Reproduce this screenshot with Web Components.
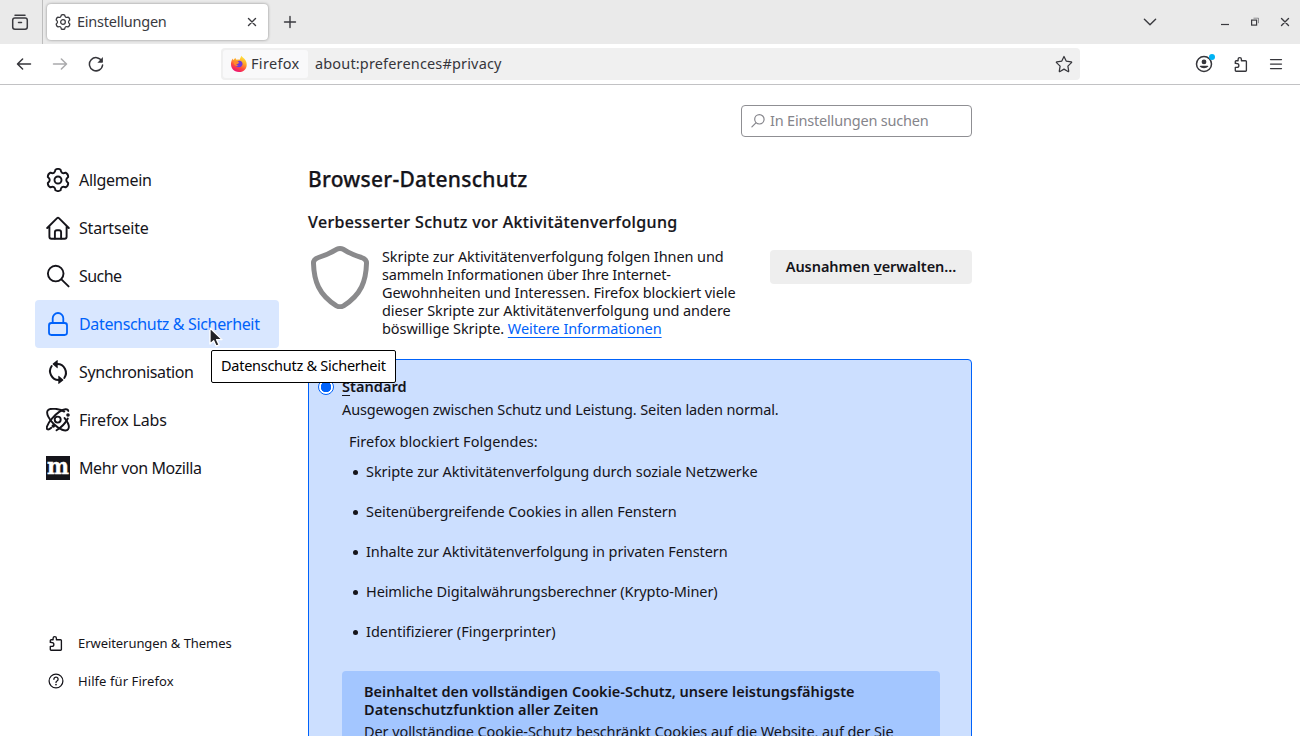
<!DOCTYPE html>
<html lang="de">
<head>
<meta charset="utf-8">
<title>Einstellungen</title>
<style>
html,body{margin:0;height:100%;overflow:hidden;background:#fff}
body{font-family:"Noto Sans","Open Sans",sans-serif;font-size:14.5px;color:#15141a}
</style>
</head>
<body>
<browser-window></browser-window>
<script>
/* Outline of a six-toothed gear around the centre of a 24px box. */
function gear(){
  const p=(r,a)=>{const t=a*Math.PI/180;return (12+r*Math.cos(t)).toFixed(2)+' '+(12-r*Math.sin(t)).toFixed(2)};
  let d='M'+p(10.6,104);
  for(let i=0;i<6;i++){const a=90-60*i;d+='Q'+p(11.9,a)+' '+p(10.6,a-14)+'Q'+p(6.3,a-30)+' '+p(10.6,a-46)}
  return d+'Z';
}
const s='fill="none" stroke="currentColor" stroke-linecap="round" stroke-linejoin="round"';
const puzzle='<path '+s+' stroke-width="1.35" d="M2.3 7.4V5.6q0-.9.9-.9H5.1V3.2a1.65 1.65 0 0 1 3.3 0V4.7h4.1q.9 0 .9.9v8.8q0 .8-.8.8H3.1q-.8 0-.8-.8v-3h1.6a1.95 1.95 0 0 0 0-3.9z"/>';
const ICONS={
  gear:[24,`<path ${s} stroke-width="1.9" d="${gear()}"/><circle cx="12" cy="12" r="3.5" ${s} stroke-width="1.9"/>`],
  home:[24,`<g ${s} stroke-width="1.9"><path d="M1.2 12 11.1 2.1q.9-.8 1.8 0L22.8 12M3.4 10.5v10.2q0 2 2 2h13.2q2 0 2-2V10.5"/><path d="M8.9 22.5v-6.2q0-2 2-2h2.2q2 0 2 2v6.2"/></g>`],
  search:[24,`<g ${s} stroke-width="1.9"><circle cx="9.7" cy="9.6" r="7.8"/><path d="m15.4 15.4 7.2 7"/></g>`],
  lock:[24,`<g ${s} stroke-width="1.8"><rect x="3" y="11" width="18" height="12" rx="2.4"/><path d="M6.7 11V6.3a5.3 5.3 0 0 1 10.6 0V11"/></g>`],
  sync:[24,`<g ${s} stroke-width="2"><path d="M11.5 4C18 4 22.500 12 18.300 18M12.500 20C6 20 1.500 12 5.700 6"/></g><path fill="currentColor" d="M11.700.5v7.200q0 .8-.7.400L6.900 4.600q-.5-.5 0-1L11 .2q.7-.4.700.300zM12.300 23.500v-7.200q0-.8.700-.4l4.100 3.500q.5.500 0 1L13 23.800q-.7.400-.7-.3z"/>`],
  atom:[24,`<g ${s} stroke-width="1.9"><path d="M5.3 19.8C1.500 23 .2 21 1.100 18.200 2.400 14 8.500 7 13.500 3.600 18 .6 22 .4 22.300 3"/><path d="M18.300 3.600C14 .8 4-.7 1.700 2.500-.2 5.400 3 11.400 8 16.300s12 8 14.200 4.800c1.500-2.300-.2-6.800-3.600-11"/><path d="M21.800 10.500c-2 4-7 9.200-11.300 11.700"/><circle cx="11.700" cy="11.600" r="3"/></g><circle cx="22" cy="7" r="1.8" fill="currentColor"/><circle cx="7.300" cy="18" r="1.8" fill="currentColor"/>`],
  mozilla:[24,`<rect width="24" height="24" fill="#15141a"/><text x="12" y="18" text-anchor="middle" fill="#fff" stroke="#fff" stroke-width=".4" font-family="DejaVu Serif,serif" font-weight="700" font-size="23" textLength="22" lengthAdjust="spacingAndGlyphs">m</text>`],
  puzzle:[16,puzzle],
  help:[16,`<circle cx="8" cy="8" r="6.9" ${s} stroke-width="1.25"/><path ${s} stroke-width="1.3" d="M5.9 6.3a2.1 2.1 0 1 1 3.4 1.5q-1.3.9-1.3 1.6"/><circle cx="8" cy="11.6" r=".85" fill="currentColor"/>`],
  view:[18,`<g ${s} stroke-width="1.5"><path d="M4 2.2h10"/><rect x="1.7" y="5" width="14.6" height="11.3" rx="2.2"/><path d="M7.5 9.500h3"/></g>`],
  close:[10,`<path ${s} stroke-width="1.4" d="m1.5 1.5 7 7m0-7-7 7"/>`],
  plus:[14,`<path ${s} stroke-width="1.4" d="M7 1.5v11M1.5 7h11"/>`],
  chevron:[14,`<path ${s} stroke-width="1.4" d="m1.4 4.2 5.6 5.6 5.6-5.6"/>`],
  min:[10,`<path stroke="currentColor" stroke-width="1.2" d="M1 7.5h8"/>`],
  restore:[10,`<rect x="1.6" y="3.1" width="5" height="5" fill="none" stroke="currentColor" stroke-width="1.2"/><path d="M3.5 1.2h5v5" fill="none" stroke="currentColor" stroke-width=".8" opacity=".65"/>`],
  back:[16,`<path ${s} stroke-width="1.5" d="M14.5 8H1.6m5-5L1.5 8l5.1 5"/>`],
  forward:[16,`<path ${s} stroke-width="1.5" d="M1.5 8h12.9M9.4 3l5.1 5-5.1 5"/>`],
  reload:[16,`<path ${s} stroke-width="1.5" d="M13.8 5A6.6 6.6 0 1 0 14.6 9"/><path fill="currentColor" d="M14.9 1v5.1q0 .6-.6.6H9.4z"/>`],
  star:[18,`<path ${s} stroke-width="1.25" d="m9 1.5 2.2 4.6 5 .7q.8.2.3.8l-3.6 3.5.8 5q0 .8-.7.4L9 14.1l-4 2.4q-.8.4-.7-.4l.8-5L1.5 7.6q-.5-.6.3-.8l5-.7z"/>`],
  account:[18,`<circle cx="9" cy="9" r="7.5" ${s} stroke-width="1.5"/><circle cx="9" cy="6.9" r="2.4" fill="currentColor"/><path fill="currentColor" d="M5.5 10.7h7q.8 0 .8.8A5.3 4 0 0 1 4.7 11.5q0-.8.8-.8z"/>`],
  menu:[16,`<path ${s} stroke-width="1.25" d="M2.5 3.5h11M2.5 8h11M2.5 12.5h11"/>`],
  glass:[16,`<g ${s} stroke-width="1.2"><circle cx="9.4" cy="6.3" r="4.7"/><path d="m5.9 9.9-4 4"/></g>`],
  shield:[64,`<path ${s} stroke-width="5" d="M28.6 4.3Q32 2.8 35.4 4.3C41 8 47 10.5 53.5 12.500Q58.800 14.300 58.500 18.500C58 35.500 53.500 49.500 35.500 60.800Q32 62.800 28.500 60.800C10.500 49.500 6 35.500 5.500 18.500Q5.200 14.300 10.500 12.500 20 9.500 28.600 4.300z"/>`],
  firefox:[18,`<defs><linearGradient id="a" x1=".8" y1="0" x2=".35" y2="1"><stop offset="0" stop-color="#fff044"/><stop offset=".4" stop-color="#ffa727"/><stop offset=".7" stop-color="#ff4b3d"/><stop offset="1" stop-color="#ec0e75"/></linearGradient></defs><path fill="url(#a)" d="M11.3.7c1 1.5 2.3 2 3.3 3.3C18.5 8.3 17.2 17 9 17 2.7 17 .2 11.5 1.2 7q.5-2.5 1.6-3.5l.6 1.7L5.3 2.8Q5.5 4 6.5 4.7q2-.6 3 .1 1-1.8 1.8-4.100z"/><path fill="#7139d8" d="M8.9 5.7c4.5-.6 5.2 6 .3 6.600-2.500.2-4.400-1.500-4.100-3.500l1.600.8 2.600-1.800-2.200-.7z"/><path fill="#ff8a2b" d="M3.400 6.300 7 6.200l1.900 1-1 1.300-1.700.4q.4 1.500 2.200 1.600l-1.300.8Q3.500 11 3.400 6.300z"/>`],
  cursor:[22,`<path d="M4 1v16l3.700-3.300 2.500 5.500 2.900-1.300-2.500-5.300H16z" fill="#222226" stroke="#fff" stroke-width="1.3" stroke-linejoin="round"/>`]
};
function define(name,html,after){
  customElements.define(name,class extends HTMLElement{
    connectedCallback(){
      if(this.shadowRoot)return;
      const t=document.createElement('template');
      t.innerHTML=typeof html==='function'?html(this):html;
      this.attachShadow({mode:'open'}).append(t.content.cloneNode(true));
      if(after)after(this);
    }
  });
}
define('ui-icon',e=>{
  const [box,body]=ICONS[e.getAttribute('name')],z=e.getAttribute('size')||box;
  return `<style>:host{display:block;flex:none;width:${z}px;height:${z}px}svg{display:block}</style><svg width="${z}" height="${z}" viewBox="0 0 ${box} ${box}">${body}</svg>`;
});
/* One line of text, tracked so that its ink takes up the width given by "w". */
define('ui-line','<style>:host{display:block;white-space:nowrap;flex:none}span{display:inline-block}</style><span><slot></slot></span>',e=>{
  const fit=()=>{
    const sp=e.shadowRoot.querySelector('span');
    sp.style.letterSpacing='0';
    const n=e.textContent.length,w=+e.getAttribute('w'),now=sp.getBoundingClientRect().width;
    if(now&&w)sp.style.letterSpacing=((w-.4-now)/n).toFixed(4)+'px';
  };
  fit();document.fonts.ready.then(fit);
});
define('tab-strip',`<style>
:host{display:flex;height:44px;flex:none;background:#eaeaea;color:#3a3a3f;align-items:center;box-sizing:border-box}
.view{height:44px;border-right:1px solid #bdbdbd;box-sizing:border-box;display:flex;align-items:center;padding-left:11px;width:43px}
.tab{margin-left:4px;width:221px;height:36px;border-radius:4px;background:#fff;box-shadow:0 0 3px rgba(0,0,0,.42);display:flex;align-items:center;box-sizing:border-box;padding:0 11px 0 8px;gap:6px}
.tab ui-line{margin-right:auto;margin-bottom:2px}
.plus{margin-left:15px}.chev{margin-left:auto}
.win{display:flex;gap:20px;margin:0 10px 0 63px}
</style><div class="view"><ui-icon name="view"></ui-icon></div>
<div class="tab"><ui-icon name="gear" size="16"></ui-icon><ui-line w="90">Einstellungen</ui-line><ui-icon name="close"></ui-icon></div>
<ui-icon class="plus" name="plus"></ui-icon><ui-icon class="chev" name="chevron"></ui-icon>
<div class="win"><ui-icon name="min"></ui-icon><ui-icon name="restore"></ui-icon><ui-icon name="close"></ui-icon></div>`);
define('nav-bar',`<style>
:host{display:flex;height:41px;flex:none;border-bottom:1px solid #c2c2c4;box-sizing:border-box;align-items:center;color:#36363b;padding:0 16px}
.nav{display:flex;gap:20px;width:205px}.off{opacity:.42}
.url{width:859px;height:32px;background:#f0f0f0;border-radius:4px;display:flex;align-items:center;box-sizing:border-box;padding:0 7px 0 2px}
.id{display:flex;align-items:center;gap:3px;background:#f9f9fa;height:28px;width:85px;border-radius:3px;box-sizing:border-box;padding-left:7px;margin-right:7px}
.url ui-line{margin-bottom:2px}
.url>ui-icon{margin-left:auto}
.tools{margin-left:auto;display:flex;align-items:center;gap:20px}
.acc{position:relative}.acc i{position:absolute;right:-2px;top:-1px;width:6px;height:6px;border-radius:50%;background:#00b3f4}
.tools ui-icon:last-child{margin-left:-1px}
</style><div class="nav"><ui-icon name="back"></ui-icon><ui-icon class="off" name="forward"></ui-icon><ui-icon name="reload"></ui-icon></div>
<div class="url"><div class="id"><ui-icon name="firefox"></ui-icon><ui-line w="49">Firefox</ui-line></div><ui-line w="187">about:preferences#privacy</ui-line><ui-icon name="star"></ui-icon></div>
<div class="tools"><div class="acc"><ui-icon name="account"></ui-icon><i></i></div><ui-icon name="puzzle"></ui-icon><ui-icon name="menu"></ui-icon></div>`);
define('nav-item',e=>`<style>
:host{display:flex;align-items:center;height:48px;padding-left:11px;gap:9px;border-radius:4px;font-size:16px;font-weight:400;box-sizing:border-box}
:host(:not([small])) ui-line{margin-bottom:1px}
:host([active]){background:#d9e7ff;color:#0062fa}
:host([small]){height:38px;font-size:13px;font-weight:400;padding-left:13px;gap:14px}
</style><ui-icon name="${e.getAttribute('icon')}"></ui-icon><ui-line w="${e.getAttribute('w')}">${e.textContent.replace('&','&amp;')}</ui-line>`);
define('side-nav',`<style>:host{display:flex;flex-direction:column;width:244px;padding:71px 0 36px 35px;flex:none}.low{margin-top:auto}</style>
<nav><nav-item icon="gear" w="73">Allgemein</nav-item><nav-item icon="home" w="70">Startseite</nav-item><nav-item icon="search" w="43">Suche</nav-item><nav-item active icon="lock" w="181">Datenschutz &amp; Sicherheit</nav-item><nav-item icon="sync" w="115">Synchronisation</nav-item><nav-item icon="atom" w="88">Firefox Labs</nav-item><nav-item icon="mozilla" w="123">Mehr von Mozilla</nav-item></nav>
<div class="low"><nav-item small icon="puzzle" w="154">Erweiterungen &amp; Themes</nav-item><nav-item small icon="help" w="96">Hilfe für Firefox</nav-item></div>`);
define('search-field',`<style>:host{display:flex;align-items:center;gap:4px;width:231px;height:32px;flex:none;border:1px solid #8f8f93;border-radius:4px;box-sizing:border-box;padding-left:8px;align-self:flex-end;color:#85858b}ui-line{margin-bottom:2px}</style><ui-icon name="glass"></ui-icon><ui-line w="159">In Einstellungen suchen</ui-line>`);
define('ui-button',`<style>:host{display:flex;align-items:center;justify-content:center;width:202px;height:34px;border-radius:4px;background:#eee;font-weight:600;flex:none}ui-line{margin-bottom:2px}u{text-underline-offset:2px;text-decoration-thickness:1px}</style><ui-line w="171">Ausnahmen <u>v</u>erwalten…</ui-line>`);
define('protection-card',`<style>
:host{display:block;flex:none;border:1px solid #0062fa;border-radius:4px;background:#ccdfff;box-sizing:border-box;height:480px;padding:18px 31px 0 9px;line-height:18px}
.head{display:flex;align-items:center;gap:8px;font-weight:600;height:18px}.head ui-line{margin-bottom:2px}
.radio{width:16px;height:16px;border:1px solid #0062fa;border-radius:50%;box-sizing:border-box;background:radial-gradient(circle,#0062fa 0 5px,#fff 5.5px)}
u{text-underline-offset:3px;text-decoration-thickness:1px}
.body{margin-left:24px}.desc{margin-top:4px}.what{margin:14px 0 0 7px}
ul{list-style:none;margin:12px 0 0 12px;padding:0;display:grid;gap:22px}
li{display:flex;align-items:center;gap:8px}li:before{content:"";width:5px;height:5px;margin:2px 0 0 -1px;border-radius:50%;background:#15141a}
.info{margin-top:31px;background:#a3c6ff;border-radius:4px;padding:11px 22px;height:100px;box-sizing:border-box}
.info b{font-weight:600;display:block;margin-bottom:4px}
</style><div class="head"><span class="radio"></span><ui-line w="65"><u>S</u>tandard</ui-line></div>
<div class="body"><ui-line class="desc" w="437">Ausgewogen zwischen Schutz und Leistung. Seiten laden normal.</ui-line>
<ui-line class="what" w="189">Firefox blockiert Folgendes:</ui-line>
<ul><li><ui-line w="392">Skripte zur Aktivitätenverfolgung durch soziale Netzwerke</ui-line></li><li><ui-line w="311">Seitenübergreifende Cookies in allen Fenstern</ui-line></li><li><ui-line w="362">Inhalte zur Aktivitätenverfolgung in privaten Fenstern</ui-line></li><li><ui-line w="352">Heimliche Digitalwährungsberechner (Krypto-Miner)</ui-line></li><li><ui-line w="190">Identifizierer (Fingerprinter)</ui-line></li></ul>
<div class="info"><b><ui-line w="491">Beinhaltet den vollständigen Cookie-Schutz, unsere leistungsfähigste</ui-line><ui-line w="235">Datenschutzfunktion aller Zeiten</ui-line></b><ui-line w="530">Der vollständige Cookie-Schutz beschränkt Cookies auf die Website, auf der Sie</ui-line></div></div>`);
define('privacy-pane',`<style>
:host{display:flex;flex-direction:column;width:664px;margin-left:29px;padding-top:20px;flex:none}
h1{font-size:21px;line-height:30px;font-weight:500;margin:27px 0 0;-webkit-text-stroke:.25px currentColor}
h2{font-size:16px;line-height:24px;font-weight:500;margin:16px 0 0;-webkit-text-stroke:.2px currentColor}
.row{display:flex;margin-top:11px;line-height:18px;height:114px;flex:none}
.row>ui-icon{color:#8a8a8c}
.text{margin:2px 0 0 10px;flex:1}
a{color:#0062fa;text-decoration:underline;text-underline-offset:3px;text-decoration-thickness:1px}
ui-button{margin-top:5px}
</style><search-field></search-field><h1><ui-line w="220">Browser-Datenschutz</ui-line></h1><h2><ui-line w="370">Verbesserter Schutz vor Aktivitätenverfolgung</ui-line></h2>
<div class="row"><ui-icon name="shield"></ui-icon><div class="text"><ui-line w="342">Skripte zur Aktivitätenverfolgung folgen Ihnen und</ui-line><ui-line w="289">sammeln Informationen über Ihre Internet-</ui-line><ui-line w="354">Gewohnheiten und Interessen. Firefox blockiert viele</ui-line><ui-line w="349">dieser Skripte zur Aktivitätenverfolgung und andere</ui-line><ui-line w="280">böswillige Skripte. <a>Weitere Informationen</a></ui-line></div><ui-button></ui-button></div>
<protection-card></protection-card>`);
define('hover-tip',`<style>:host{position:absolute;left:211px;top:350px;width:185px;height:33px;box-sizing:border-box;border:1px solid #000;border-radius:2px;background:#fff;display:flex;align-items:center;padding-left:9px;color:#000}ui-line{margin-bottom:3px}</style><ui-line w="165">Datenschutz &amp; Sicherheit</ui-line>`);
define('browser-window',`<style>:host{display:flex;flex-direction:column;height:736px;width:1300px;overflow:hidden;position:relative}main{display:flex;height:651px;flex:none;overflow:hidden}.cur{position:absolute;left:206px;top:327px}</style>
<tab-strip></tab-strip><nav-bar></nav-bar><main><side-nav></side-nav><privacy-pane></privacy-pane></main><hover-tip></hover-tip><ui-icon class="cur" name="cursor"></ui-icon>`);
</script>
</body>
</html>
